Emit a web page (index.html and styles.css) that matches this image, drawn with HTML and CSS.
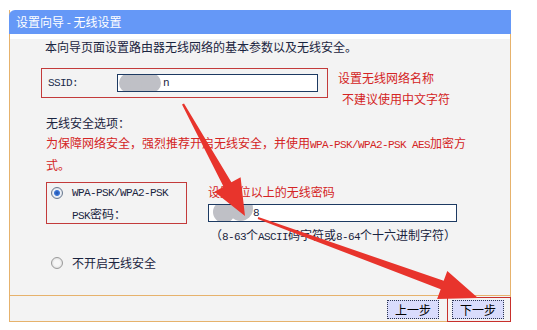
FILE: index.html
```html
<!DOCTYPE html>
<html lang="zh-CN">
<head>
    <meta charset="UTF-8">
    <title>设置向导 - 无线设置</title>
    <link rel="stylesheet" href="styles.css">
</head>
<body>
    <div class="wizard">
        <div class="wizard-title">设置向导 - 无线设置</div>
        <div class="wizard-body">
            <p class="intro">本向导页面设置路由器无线网络的基本参数以及无线安全。</p>
            <div class="ssid-row">
                <div class="mark ssid-box">
                    <span class="en ssid-label">SSID:</span>
                    <div class="field ssid-field">
                        <span class="blur s1"></span><span class="blur s2"></span><span class="blur s3"></span>
                        <span class="en">n</span>
                    </div>
                </div>
                <div class="note">设置无线网络名称<br><span class="note-2">不建议使用中文字符</span></div>
            </div>
            <p class="label">无线安全选项：</p>
            <p class="warn">为保障网络安全，强烈推荐开启无线安全，并使用<span class="en">WPA-PSK/WPA2-PSK AES</span>加密方<br>式。</p>
            <div class="wpa-row">
                <div class="mark wpa-box">
                    <div class="opt"><span class="radio checked"></span><span class="en">WPA-PSK/WPA2-PSK</span></div>
                    <div class="psk"><span class="en">PSK</span>密码：</div>
                </div>
                <div class="pwd">
                    <div class="note">设置8位以上的无线密码</div>
                    <div class="field pwd-field">
                        <span class="blur p1"></span><span class="blur p2"></span>
                        <span class="en">8</span>
                    </div>
                    <div class="hint">（<span class="en">8-63</span>个<span class="en">ASCII</span>码字符或<span class="en">8-64</span>个十六进制字符）</div>
                </div>
            </div>
            <div class="opt off"><span class="radio"></span>不开启无线安全</div>
        </div>
        <div class="wizard-foot">
            <button type="button" class="btn prev">上一步</button>
            <span class="mark next"><button type="button" class="btn">下一步</button></span>
        </div>
    </div>
    <svg class="arrows" width="537" height="330" viewBox="0 0 537 330">
        <polygon points="182,104.5 184,103.5 231.4,182.3 240.6,177.2 245,216 214.4,191.8 223.6,186.7" />
        <polygon points="258.3,217.1 257.7,218.9 440.7,289.2 437.1,299.1 478,298 447.3,270.9 443.7,280.8" />
    </svg>
</body>
</html>
```

FILE: styles.css
```css
body { margin: 0; background: #fff; font-family: "Noto Sans CJK SC", sans-serif; font-size: 12px; color: #1a2440; }
p { margin: 0; }
.en { font-family: "Liberation Mono", monospace; font-size: 11px; letter-spacing: -0.6px; }

.wizard { position: relative; margin: 10px 0 0 9px; width: 500px; border: 1px solid #e6b26c; border-top: none; }
.wizard-title { margin: 0 -1px; height: 24px; line-height: 24px; padding-left: 7px; background: #6598f7; color: #fff; border-radius: 6px 0 0 0; }
.wizard-body { height: 256px; background: #f3f3f3; }

.intro { margin: 5px 0 0 35px; line-height: 16px; }

.mark { border: 1px solid #c33a3a; }
.note { color: #d42424; line-height: 20px; }

.ssid-row { display: flex; align-items: flex-start; margin: 13px 0 0 31px; }
.ssid-box { display: flex; align-items: center; width: 279px; height: 28px; padding-left: 6px; }
.ssid-label { width: 69px; color: #1a2b4c; }
.ssid-row .note { margin-left: 10px; }
.note-2 { display: inline-block; padding-left: 4px; line-height: 22px; }

.field { position: relative; display: flex; align-items: center; height: 16px; background: #fff; border: 1px solid #1d3a62; overflow: hidden; }
.ssid-field { width: 154px; padding-left: 45px; }
.pwd-field { width: 203px; padding-left: 44px; margin-top: 2px; }
.blur { position: absolute; border-radius: 50%; background: #bfc0c6; filter: blur(0.6px); }
.s1 { left: 1px; top: -2px; width: 20px; height: 20px; }
.s2 { left: 12px; top: -2px; width: 20px; height: 20px; }
.s3 { left: 23px; top: -2px; width: 20px; height: 20px; }
.p1 { left: 4px; top: -4px; width: 22px; height: 22px; }
.p2 { left: 19px; top: -9px; width: 25px; height: 25px; }

.label { margin: 5px 0 0 36px; line-height: 16px; }
.warn { margin: 2px 0 0 36px; line-height: 19px; color: #d42424; }

.wpa-row { display: flex; align-items: flex-start; margin: 8px 0 0 36px; }
.wpa-box { width: 135px; height: 40px; padding-left: 4px; }
.opt { display: flex; align-items: center; line-height: 20px; }
.psk { padding-left: 21px; line-height: 21px; }
.pwd { margin-left: 21px; }
.hint { margin: 5px 0 0 2px; line-height: 16px; }

.radio { width: 12px; height: 12px; margin-right: 9px; border-radius: 50%; box-sizing: border-box; border: 1px solid #9a9a9a; background: radial-gradient(circle, #f6f6f6 40%, #d0d0d0 100%); }
.radio.checked { border-color: #6a7a90; background: radial-gradient(circle, #1e4fa8 0, #3d78d8 2.5px, #eef2f8 3.5px, #c8ccd4 100%); }
.off { margin: 10px 0 0 41px; line-height: 16px; }

.wizard-foot { display: flex; justify-content: flex-end; align-items: flex-start; height: 26px; padding-top: 1px; box-sizing: border-box; border-top: 1px solid #e6b26c; background: #f3f3f3; }
.btn { width: 52px; height: 19px; margin-top: 3px; padding: 0; font-family: "Noto Sans CJK SC", sans-serif; font-size: 12px; line-height: 17px; color: #000; background: #d9dcfc; border: 1px dotted #2a3450; }
.prev { margin-right: 8px; }
.next { display: flex; height: 25px; margin-right: -1px; padding: 0 6px 0 4px; box-sizing: border-box; border-color: #c8302c; }
.next .btn { margin-top: 2px; }

.arrows { position: absolute; top: 0; left: 0; pointer-events: none; }
.arrows polygon { fill: #e8342c; }
```
